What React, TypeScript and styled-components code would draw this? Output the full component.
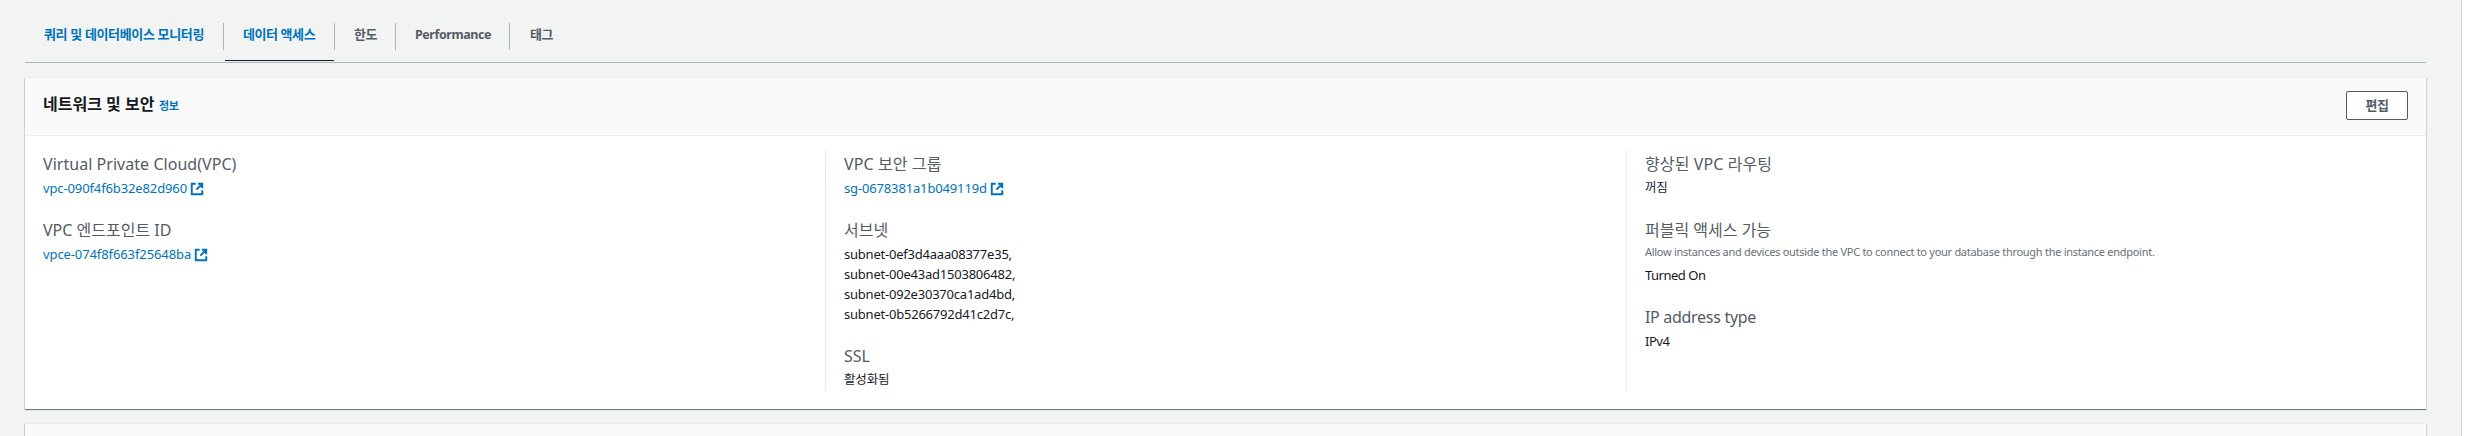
import React from 'react';
import styled, { createGlobalStyle } from 'styled-components';

const Global = createGlobalStyle`
  * { box-sizing: border-box; }
  body {
    margin: 0;
    background: #fff;
    color: #16191f;
    font: 400 13px/20px "Noto Sans", "Noto Sans CJK KR", sans-serif;
  }
`;

const Page = styled.main`
  width: 2462px;
  height: 436px;
  overflow: hidden;
  padding: 0 35px 0 25px;
  background: #f2f3f3;
  border-right: 1px solid #cccfcf;
`;

const Tabs = styled.nav`
  display: flex;
  height: 63px;
  border-bottom: 1px solid #aab7b8;
`;

const Tab = styled.div<{ $width: number }>`
  width: ${(p) => p.$width}px;
  padding-top: 23px;
`;

const TabLabel = styled.a<{ $link?: boolean; $last?: boolean; $size?: number; $spacing: number }>`
  display: block;
  height: 27px;
  padding-left: ${(p) => (p.$last ? 20 : 19)}px;
  border-right: ${(p) => (p.$last ? 'none' : '1px solid #aab7b8')};
  color: ${(p) => (p.$link ? '#0073bb' : '#545b64')};
  font-size: ${(p) => p.$size ?? 13}px;
  font-weight: 700;
  line-height: 23px;
  letter-spacing: ${(p) => p.$spacing}px;
  white-space: nowrap;
`;

const TabBar = styled.div`
  height: 1px;
  margin: 10px 1px 0;
  background: #16191f;
`;

const Panel = styled.section`
  margin-top: 14px;
  height: 332px;
  background: #fff;
  border-top: 1px solid #eaeded;
  box-shadow: 0 1px 0 0 rgba(0, 28, 36, 0.35), 1px 1px 0 0 rgba(0, 28, 36, 0.15),
    -1px 1px 0 0 rgba(0, 28, 36, 0.15), 0 2px 0 0 rgba(0, 28, 36, 0.06);
`;

const PanelHeader = styled.header`
  display: flex;
  align-items: center;
  height: 58px;
  padding: 0 18px;
  background: #fafafa;
  border-bottom: 1px solid #eaeded;
`;

const Title = styled.h2`
  margin: 0 auto 4px 0;
  font-size: 16px;
  font-weight: 700;
  line-height: 24px;
`;

const InfoLink = styled.a`
  margin-left: 4.5px;
  color: #0073bb;
  font-size: 11px;
  letter-spacing: -0.3px;
`;

const Button = styled.button`
  width: 62px;
  height: 29px;
  margin-bottom: 2px;
  padding: 0 0 2px;
  background: #fff;
  border: 1px solid #545b64;
  border-radius: 2px;
  color: #545b64;
  font: 700 13px/20px "Noto Sans", "Noto Sans CJK KR", sans-serif;
  letter-spacing: -0.4px;
`;

const Columns = styled.div`
  display: grid;
  grid-template-columns: 800px 801px 800px;
  height: 241px;
  margin-top: 14px;
`;

const Column = styled.div`
  display: flex;
  flex-direction: column;
  gap: 20px;
  padding: 2px 18px 0;
  & + & {
    border-left: 1px solid #eaeded;
  }
`;

const Label = styled.div<{ $spacing?: number }>`
  padding-top: 1px;
  margin-bottom: 3px;
  color: #545b64;
  font-size: 16px;
  line-height: 22px;
  letter-spacing: ${(p) => p.$spacing ?? 0}px;
`;

const Description = styled.div`
  margin-bottom: 5px;
  color: #687078;
  font-size: 11px;
  line-height: 16px;
  letter-spacing: -0.28px;
`;

const Value = styled.div<{ $spacing?: number; $size?: number; $link?: boolean }>`
  display: flex;
  align-items: center;
  gap: 3px;
  height: 20px;
  color: ${(p) => (p.$link ? '#0073bb' : '#16191f')};
  font-size: ${(p) => p.$size ?? 13}px;
  letter-spacing: ${(p) => p.$spacing ?? 0}px;
  svg {
    margin-top: 2px;
  }
`;

const ExternalIcon = () => (
  <svg width="14" height="14" viewBox="0 0 16 16" fill="none" stroke="#0073bb" strokeWidth="2.2">
    <path d="M9 2h5v5M7.3 8.7L14 2M14 9.5V14H2V2h4.5" />
  </svg>
);

const subnets = [
  'subnet-0ef3d4aaa08377e35,',
  'subnet-00e43ad1503806482,',
  'subnet-092e30370ca1ad4bd,',
  'subnet-0b5266792d41c2d7c,',
];

export default function App() {
  return (
    <>
      <Global />
      <Page>
        <Tabs>
          <Tab $width={199}>
            <TabLabel $link $spacing={-0.35}>쿼리 및 데이터베이스 모니터링</TabLabel>
          </Tab>
          <Tab $width={111}>
            <TabLabel $link $spacing={-0.42}>데이터 액세스</TabLabel>
            <TabBar />
          </Tab>
          <Tab $width={61}>
            <TabLabel $spacing={-0.4}>한도</TabLabel>
          </Tab>
          <Tab $width={114}>
            <TabLabel $size={12.5} $spacing={-0.43}>Performance</TabLabel>
          </Tab>
          <Tab $width={80}>
            <TabLabel $last $spacing={-0.4}>태그</TabLabel>
          </Tab>
        </Tabs>
        <Panel>
          <PanelHeader>
            <Title>
              네트워크 및 보안<InfoLink>정보</InfoLink>
            </Title>
            <Button>편집</Button>
          </PanelHeader>
          <Columns>
            <Column>
              <div>
                <Label $spacing={0.04}>Virtual Private Cloud(VPC)</Label>
                <Value $link $spacing={-0.12}>vpc-090f4f6b32e82d960<ExternalIcon /></Value>
              </div>
              <div>
                <Label>VPC 엔드포인트 ID</Label>
                <Value $link $spacing={-0.1}>vpce-074f8f663f25648ba<ExternalIcon /></Value>
              </div>
            </Column>
            <Column>
              <div>
                <Label $spacing={0.1}>VPC 보안 그룹</Label>
                <Value $link $spacing={-0.15}>sg-0678381a1b049119d<ExternalIcon /></Value>
              </div>
              <div>
                <Label>서브넷</Label>
                {subnets.map((id) => (
                  <Value key={id} $spacing={-0.22}>{id}</Value>
                ))}
              </div>
              <div>
                <Label>SSL</Label>
                <Value $size={12.5} $spacing={-0.15}>활성화됨</Value>
              </div>
            </Column>
            <Column>
              <div>
                <Label $spacing={0.1}>향상된 VPC 라우팅</Label>
                <Value $size={12.5} $spacing={-0.15}>꺼짐</Value>
              </div>
              <div>
                <Label>퍼블릭 액세스 가능</Label>
                <Description>
                  Allow instances and devices outside the VPC to connect to your database through the instance endpoint.
                </Description>
                <Value $spacing={-0.5}>Turned On</Value>
              </div>
              <div>
                <Label $spacing={-0.3}>IP address type</Label>
                <Value $spacing={-0.5}>IPv4</Value>
              </div>
            </Column>
          </Columns>
        </Panel>
        <Panel>
          <PanelHeader />
        </Panel>
      </Page>
    </>
  );
}
